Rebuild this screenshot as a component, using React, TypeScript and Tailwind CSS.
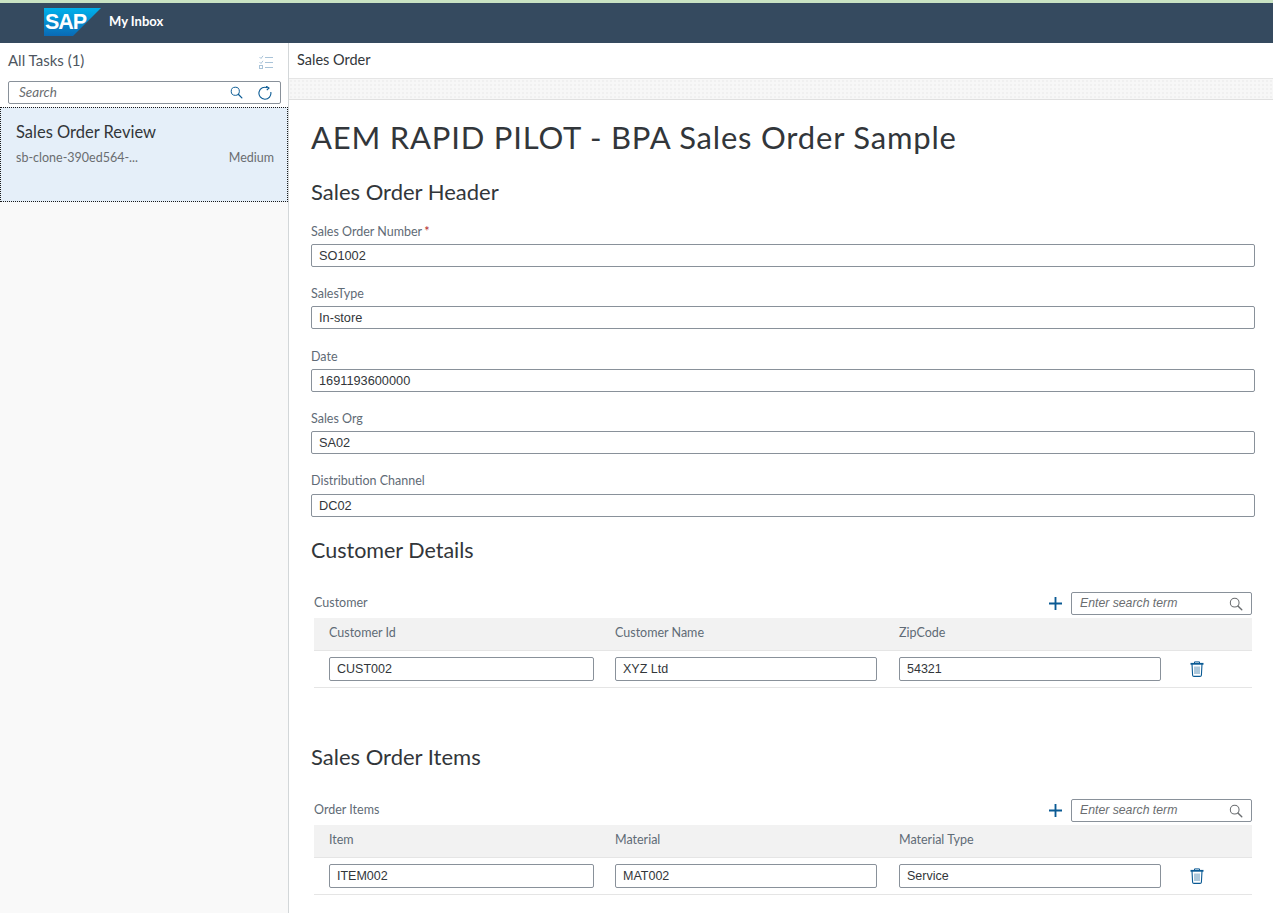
import React from "react";

const f72 = "font-['Lato','Noto_Sans',sans-serif]";

function SearchIcon({ className }: { className: string }) {
  return (
    <svg viewBox="0 0 16 16" className={className} fill="none" stroke="currentColor" strokeWidth="1.2">
      <circle cx="6.5" cy="6.5" r="5" />
      <path d="M10.2 10.2 L14.6 14.6" strokeWidth="1.6" strokeLinecap="round" />
    </svg>
  );
}

function Trash() {
  return (
    <svg viewBox="0 0 14 16" className="w-[14px] h-[16px] text-[#0a5a94]" fill="none" stroke="currentColor">
      <path d="M0.5 2.8 H13.5" strokeWidth="1.8" />
      <path d="M4.5 2.5 V0.9 H9.5 V2.5" strokeWidth="1" />
      <path d="M2 3 L2.6 14.2 Q2.7 15.4 4 15.4 H10 Q11.3 15.4 11.4 14.2 L12 3" strokeWidth="1.1" />
      <path d="M5 5.5 V13 M7 5.5 V13 M9 5.5 V13" strokeWidth="0.9" opacity="0.75" />
    </svg>
  );
}

function Field({ label, value, required, mb, labelH = "h-[20px]" }: { label: string; value: string; required?: boolean; mb: string; labelH?: string }) {
  return (
    <div className={mb}>
      <div className={`${f72} text-[12.5px] leading-[16px] text-[#5f6b76] ${labelH}`}>
        {label}
        {required && <span className="text-[#b3262a] ml-[2px]">*</span>}
      </div>
      <div className="h-[23px] border border-[#89919a] rounded-[2px] bg-white pl-[7px] flex items-center font-['Liberation_Sans',sans-serif] text-[12.75px] text-[#32363a]">
        {value}
      </div>
    </div>
  );
}

function CellInput({ value, w }: { value: string; w: string }) {
  return (
    <div className={`${w} h-[24px] border border-[#89919a] rounded-[2px] bg-white pl-[7px] flex items-center font-['Liberation_Sans',sans-serif] text-[12.5px] text-[#32363a]`}>
      {value}
    </div>
  );
}

function Table({ title, cols, vals }: { title: string; cols: string[]; vals: string[] }) {
  return (
    <div className="ml-[3px] w-[938px]">
      <div className="h-[27px] flex items-center justify-between">
        <span className={`${f72} text-[12.5px] text-[#5f6b76]`}>{title}</span>
        <div className="flex items-center">
          <svg viewBox="0 0 14 14" className="w-[13px] h-[13px] mr-[9px] text-[#0a5a94]" fill="none" stroke="currentColor" strokeWidth="2">
            <path d="M7 0 V14 M0 7 H14" />
          </svg>
          <div className="w-[181px] h-[23px] border border-[#89919a] rounded-[2px] flex items-center justify-between pl-[8px] pr-[8px] font-['Liberation_Sans',sans-serif] italic text-[12.25px] text-[#6a6d70]">
            Enter search term
            <SearchIcon className="w-[14px] h-[14px] text-[#6a6d70]" />
          </div>
        </div>
      </div>
      <div className={`mt-[1px] h-[33px] pb-[2px] bg-[#f2f2f2] border-b border-[#e5e5e5] flex items-center pl-[15px] ${f72} text-[12.5px] text-[#5f6b76]`}>
        <span className="w-[286px]">{cols[0]}</span>
        <span className="w-[284px]">{cols[1]}</span>
        <span>{cols[2]}</span>
      </div>
      <div className="h-[37px] border-b border-[#e5e5e5] flex items-center pl-[15px]">
        <div className="w-[286px]"><CellInput value={vals[0]} w="w-[265px]" /></div>
        <div className="w-[284px]"><CellInput value={vals[1]} w="w-[262px]" /></div>
        <CellInput value={vals[2]} w="w-[262px]" />
        <div className="ml-[29px]"><Trash /></div>
      </div>
    </div>
  );
}

const h2 = `${f72} font-normal leading-[26px] text-[#32363a]`;

export default function App() {
  return (
    <div className="w-[1273px] h-[913px] overflow-hidden flex flex-col bg-white">
      <div className="h-[3px] bg-[#c9e3c3]" />
      <header className="h-[40px] pb-[2px] bg-[#354a5f] flex items-center pl-[44px] shrink-0">
        <svg viewBox="0 0 57 28" className="w-[57px] h-[28px]">
          <defs>
            <linearGradient id="sapg" x1="0" y1="0" x2="0" y2="1">
              <stop offset="0" stopColor="#00b1eb" />
              <stop offset="1" stopColor="#0a6ab5" />
            </linearGradient>
          </defs>
          <path d="M0 0 H57 L29 28 H0 Z" fill="url(#sapg)" />
          <text x="1" y="21" fill="#fff" fontFamily="'Liberation Sans',sans-serif" fontWeight="700" fontSize="21.5" letterSpacing="-1.1">SAP</text>
        </svg>
        <span className={`ml-[8px] ${f72} font-bold text-[13px] text-white`}>My Inbox</span>
      </header>
      <div className="flex flex-1 min-h-0">
        <aside className="w-[289px] shrink-0 border-r border-[#d3d7d9] bg-[#f9f9f9] flex flex-col">
          <div className="bg-white h-[64px] shrink-0">
            <div className="h-[35px] flex items-center justify-between pl-[8px] pr-[15px]">
              <span className={`${f72} text-[15px] text-[#4e5660]`}>All Tasks (1)</span>
              <svg viewBox="0 0 14 15" className="w-[14px] h-[15px] mt-[3px] text-[#a9c3d8]" fill="none" stroke="currentColor" strokeWidth="1">
                <path d="M6 2.5 H14 M6 7.5 H14 M6 12.5 H14" />
                <path d="M0.5 2 L2 3.5 L4 0.8 M0.5 7 L2 8.5 L4 5.8" />
                <rect x="0.5" y="10.5" width="3" height="3" />
              </svg>
            </div>
            <div className="mt-[3px] ml-[8px] w-[273px] h-[23px] border border-[#89919a] rounded-[2px] flex items-center pl-[10px] pr-[8px]">
              <span className={`${f72} italic text-[13.5px] text-[#6a6d70] flex-1`}>Search</span>
              <SearchIcon className="w-[13px] h-[13px] text-[#0a5a94]" />
              <svg viewBox="0 0 14 14" className="w-[14px] h-[14px] ml-[15px] text-[#0a5a94]" fill="none" stroke="currentColor" strokeWidth="1.1">
                <path d="M9.5 1.8 A6 6 0 1 0 12.8 6" />
                <path d="M8.2 0.2 L11 2 L8.8 4.2" />
              </svg>
            </div>
          </div>
          <div className="h-[95px] bg-[#e5eff9] border border-dotted border-[#1a1a1a] pl-[15px] pr-[13px] shrink-0">
            <div className={`${f72} text-[16.5px] text-[#32363a] pt-[14px] leading-[20px]`}>Sales Order Review</div>
            <div className={`${f72} flex justify-between text-[12.5px] text-[#6a6d70] mt-[8px] leading-[16px]`}>
              <span>sb-clone-390ed564-...</span>
              <span>Medium</span>
            </div>
          </div>
        </aside>
        <main className="flex-1 min-w-0 flex flex-col">
          <div className={`h-[36px] shrink-0 bg-white border-b border-[#e5e5e5] flex items-center pb-[1px] pl-[8px] ${f72} text-[14.5px] text-[#32363a]`}>
            Sales Order
          </div>
          <div className="h-[21px] shrink-0 bg-[#f7f7f7] bg-[radial-gradient(#f0f0f0_1px,transparent_1px)] bg-[length:4px_4px] border-b border-[#e0e0e0]" />
          <div className="flex-1 pl-[22px] pr-[18px]">
            <h1 className={`${f72} font-normal text-[31px] tracking-[0.8px] leading-[36px] text-[#32363a] mt-[19px]`}>AEM RAPID PILOT - BPA Sales Order Sample</h1>
            <h2 className={`${h2} text-[22px] mt-[24px] mb-[19px]`}>Sales Order Header</h2>
            <Field label="Sales Order Number" value="SO1002" required mb="mb-[19px]" />
            <Field label="SalesType" value="In-store" mb="mb-[20px]" />
            <Field label="Date" value="1691193600000" mb="mb-[19px]" />
            <Field label="Sales Org" value="SA02" mb="mb-[19px]" />
            <Field label="Distribution Channel" value="DC02" labelH="h-[21px]" mb="mb-[20px]" />
            <h2 className={`${h2} text-[21.5px] mb-[27px]`}>Customer Details</h2>
            <Table title="Customer" cols={["Customer Id", "Customer Name", "ZipCode"]} vals={["CUST002", "XYZ Ltd", "54321"]} />
            <h2 className={`${h2} text-[22px] mt-[56px] mb-[27px]`}>Sales Order Items</h2>
            <Table title="Order Items" cols={["Item", "Material", "Material Type"]} vals={["ITEM002", "MAT002", "Service"]} />
          </div>
        </main>
      </div>
    </div>
  );
}
